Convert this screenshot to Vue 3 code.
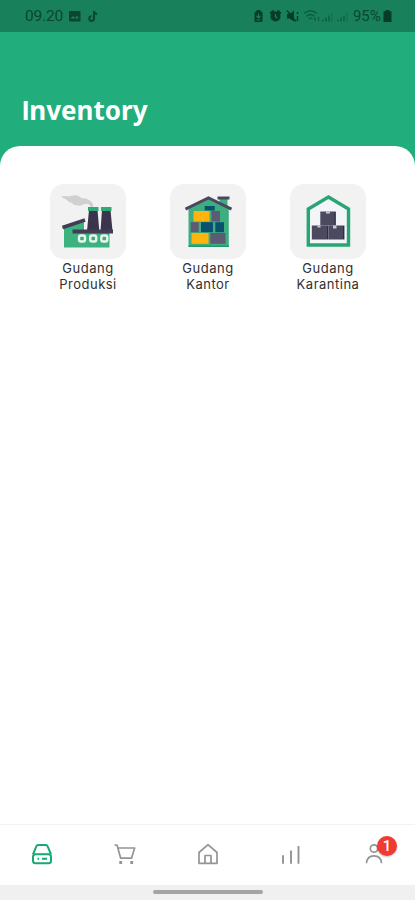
<script setup>
import { ref } from 'vue'

const active = ref('storage')
const notifications = ref(1)

const warehouses = [
  { id: 'produksi', name: ['Gudang', 'Produksi'] },
  { id: 'kantor', name: ['Gudang', 'Kantor'] },
  { id: 'karantina', name: ['Gudang', 'Karantina'] },
]

const tabs = ['storage', 'cart', 'home', 'stats', 'profile']
</script>

<template>
  <div class="phone">
    <div class="status">
      <span class="clock">09.20</span>
      <svg class="left-icons" width="32" height="14" viewBox="0 0 32 14">
        <rect x="1" y="2" width="11.500" height="10.500" rx="1" fill="#0b4631" />
        <path d="M2.500 9.500l2.500-2.500 2.200 2L9 6.500l2 3z" fill="#18805b" />
        <path d="M26 2v7.600a2.400 2.400 0 1 1-2.400-2.400M26 2.400c.3 1.800 1.400 2.600 3.200 2.800" fill="none" stroke="#0b4631" stroke-width="2" />
      </svg>
      <svg class="right-icons" width="98" height="14" viewBox="0 0 98 14">
        <g fill="#063c29">
          <rect x="1.500" y="2.500" width="8" height="10.500" rx="1.500" />
          <rect x="3.500" y="1" width="4" height="2" />
          <circle cx="22.500" cy="7.500" r="5" />
          <path d="M16.500 4l3-3 2 1-3.500 3.500zM28.500 4l-3-3-2 1 3.500 3.500z" />
          <path d="M34 5h2.500L41 1.500v11L36.500 9.500H34z" />
        </g>
        <path d="M5.500 4.500v4M3.500 7l2 2 2-2M3.500 11h4M22.500 4.800v3l2 1.200" fill="none" stroke="#18805b" stroke-width="1.200" />
        <path d="M34 1.500l9 11M44.500 3v2M44.500 7v5" stroke="#063c29" stroke-width="1.400" />
        <g fill="none" stroke="#0d5b40" stroke-width="1.300">
          <path d="M51 4.500q6.500-5.500 13 0M53.500 7.300q4-3.500 8 0M55.500 10q2-1.700 4 0" />
          <path d="M62 12V8.500M65.500 8v4M70 12.500v-2M73 12.500v-4M76 12.500v-6" />
          <path d="M85 12.500v-2M88 12.500v-4M91 12.500v-6" />
          <path d="M79 12.500V3.500M94 12.500V3" opacity=".4" />
        </g>
      </svg>
      <span class="percent">95%</span>
      <svg class="battery" width="9" height="12" viewBox="0 0 9 12">
        <path d="M2.500 0h4v1.300H8.500V12H.5V1.300h2z" fill="#063c29" />
      </svg>
    </div>

    <header>
      <h1>Inventory</h1>
    </header>

    <main>
      <div class="warehouses">
        <div class="warehouse" v-for="item in warehouses" :key="item.id">
          <div class="tile">
            <svg v-if="item.id === 'produksi'" width="76" height="75" viewBox="0 0 76 75">
              <path d="M11 12.500c4-1.500 7 .5 10-.5s7-1 9 1 4 .5 7 2 5 2.500 6 5v4h-2c-1-4-3-4.500-6-4-3 .5-4 2.500-7 1.500-3 .5-5-1.500-7-3-4-.5-3-3-6-3.500z" fill="#d0d0d1" />
              <path d="M39 26h8.500l1.800 21H37zM52 26h8.500l2 21H50.500z" fill="#3b344d" />
              <path d="M38 23h10.500v4H38zM51 23h10.500v4H51z" fill="#2fab78" />
              <path d="M14 43l20-7v11h25.500v16.500H14z" fill="#3cb37f" />
              <path d="M22.500 45.500h40.500v4H22.500z" fill="#443c56" />
              <path d="M12.500 43.500L35 36" stroke="#443c56" stroke-width="3.500" />
              <g fill="#4fa382" stroke="#e6f6ee" stroke-width="2.400">
                <rect x="29" y="51.500" width="6" height="6" rx="2" />
                <rect x="40.200" y="51.500" width="6" height="6" rx="2" />
                <rect x="51.300" y="51.500" width="6" height="6" rx="2" />
              </g>
            </svg>
            <svg v-else-if="item.id === 'kantor'" width="76" height="75" viewBox="0 0 76 75">
              <path d="M49.500 14h8v11h-8z" fill="#3eae80" />
              <path d="M18.500 25l20-10 20.300 10v38H18.500z" fill="#3eae80" />
              <path d="M18.500 61.500h40.300V63H18.500z" fill="#219a69" />
              <path d="M47.500 12.500h12v3h-12z" fill="#4a4860" />
              <path d="M15.500 25.200l23-11.200 23 11.200" fill="none" stroke="#4a4860" stroke-width="3" />
              <g fill="#fdb50d">
                <rect x="23.500" y="27" width="16" height="10.500" />
                <rect x="21.500" y="49" width="17" height="10.800" />
              </g>
              <g fill="#0b506f">
                <rect x="34.700" y="22" width="10" height="4.500" />
                <rect x="31" y="38.200" width="12" height="10" />
                <rect x="45.300" y="38.200" width="8.700" height="10" />
              </g>
              <g fill="#5d5b73">
                <rect x="41.500" y="27" width="8.500" height="10.500" />
                <rect x="20.700" y="38.200" width="8" height="10" />
                <rect x="40.300" y="49" width="15.200" height="10.800" />
              </g>
            </svg>
            <svg v-else width="76" height="75" viewBox="0 0 76 75">
              <path d="M18.300 61V25L38.500 13l20 12v36z" fill="#f4f5f8" stroke="#26a673" stroke-width="3.400" />
              <g fill="#4c4a5f">
                <rect x="30.300" y="27.500" width="15.500" height="14" />
                <rect x="21.800" y="41.500" width="16.500" height="14" />
                <rect x="38.300" y="41.500" width="16.200" height="14" />
              </g>
              <path d="M36 27.500h4v2h-4zM27.500 41.500h3v2h-3zM43 41.500h3.500v3h-3.500z" fill="#c9c9d3" />
              <path d="M45 28v13M37.500 42v13M53.500 42v13" stroke="#302c42" stroke-width="1" />
            </svg>
          </div>
          <p>{{ item.name[0] }}<br />{{ item.name[1] }}</p>
        </div>
      </div>
    </main>

    <nav>
      <button v-for="tab in tabs" :key="tab" :class="{ active: active == tab }" :aria-label="tab" @click="active = tab">
        <svg v-if="tab === 'storage'" width="24" height="24" viewBox="0 0 24 24">
          <path d="M3 12.500L6.200 4.600Q6.700 3 8.500 3h7q1.800 0 2.300 1.600L21 12.500" />
          <rect x="3" y="12.200" width="18" height="9" rx="2.500" />
          <path d="M7.500 16.700h1.500M12 16.700h5" />
        </svg>
        <svg v-else-if="tab === 'cart'" width="24" height="24" viewBox="0 0 24 24">
          <path d="M1.500 3H4l3.700 13.200h10.800L21.700 6H5" />
          <path d="M6.300 20.500h2.800M17.300 20.500h2.800" stroke-width="2.800" />
        </svg>
        <svg v-else-if="tab === 'home'" width="24" height="24" viewBox="0 0 24 24">
          <path d="M3 10.500L12 2.700l9 7.800v10.800H3z" />
          <path d="M9 21v-7.500h6V21" />
        </svg>
        <svg v-else-if="tab === 'stats'" width="24" height="24" viewBox="0 0 24 24">
          <path d="M4 21.700v-8.500M12 21.700V8.500M19.500 21.700V4" stroke-width="1.900" />
        </svg>
        <svg v-else width="24" height="24" viewBox="0 0 24 24">
          <circle cx="12" cy="6.500" r="3.700" />
          <path d="M4.500 21.300c.3-5 3-7.500 7.500-7.500s7.200 2.500 7.500 7.500" />
        </svg>
        <span v-if="tab === 'profile'" class="badge">{{ notifications }}</span>
      </button>
    </nav>
    <footer><div class="handle"></div></footer>
  </div>
</template>

<style>
body {
  margin: 0;
  background: #fff;
}
</style>

<style scoped>
.phone {
  display: flex;
  flex-direction: column;
  width: 415px;
  height: 900px;
  overflow: hidden;
  background: #21ae7c;
}

.status {
  display: flex;
  align-items: center;
  box-sizing: border-box;
  height: 32px;
  flex: none;
  padding-left: 25px;
  background: #18805b;
  color: #0b4631;
  font: 15.5px Roboto, sans-serif;
}

.clock {
  width: 43px;
  letter-spacing: -0.2px;
}

.left-icons {
  margin-right: 153px;
}

.percent {
  margin-left: 2px;
  width: 30px;
  font-size: 15px;
  letter-spacing: -0.1px;
}

header {
  height: 114px;
  flex: none;
  box-sizing: border-box;
  padding: 61px 0 0 22px;
}

h1 {
  margin: 0;
  color: #fff;
  font: bold 26px/34px "Noto Sans", sans-serif;
}

h1::first-letter {
  font-family: Inter, sans-serif;
}

main {
  flex: 1;
  box-sizing: border-box;
  padding: 38px 50px 0;
  background: #fff;
  border-radius: 20px 20px 0 0;
}

.warehouses {
  display: flex;
  gap: 44px;
}

.warehouse {
  width: 76px;
}

.tile {
  width: 76px;
  height: 75px;
  background: #f2f2f2;
  border-radius: 14px;
}

svg {
  display: block;
  flex: none;
}

p {
  margin: 1px 0 0;
  color: #303030;
  font: 13px/16px Inter, sans-serif;
  letter-spacing: 0.5px;
  text-align: center;
}

nav {
  display: flex;
  flex: none;
  height: 60px;
  border-top: 1px solid #f2f2f2;
  background: #fff;
}

button {
  position: relative;
  display: flex;
  flex: 1;
  align-items: center;
  justify-content: center;
  padding: 0 0 2px;
  border: 0;
  background: none;
  color: #949494;
}

nav svg {
  fill: none;
  stroke: currentColor;
  stroke-width: 1.7;
  stroke-linejoin: round;
}

button.active {
  color: #18a873;
}

button.active svg {
  stroke-width: 2;
}

.badge {
  position: absolute;
  top: 11px;
  left: 45px;
  width: 20px;
  height: 20px;
  border-radius: 50%;
  background: #f13a30;
  box-shadow: 0 1px 2px #0004;
  color: #fff;
  font: 500 15px/20px Roboto, sans-serif;
  text-align: center;
}

footer {
  display: flex;
  justify-content: center;
  box-sizing: border-box;
  height: 15px;
  flex: none;
  padding-top: 5px;
  background: #f0f0f0;
}

.handle {
  width: 110px;
  height: 4px;
  border-radius: 2px;
  background: #a4a4a4;
}
</style>
